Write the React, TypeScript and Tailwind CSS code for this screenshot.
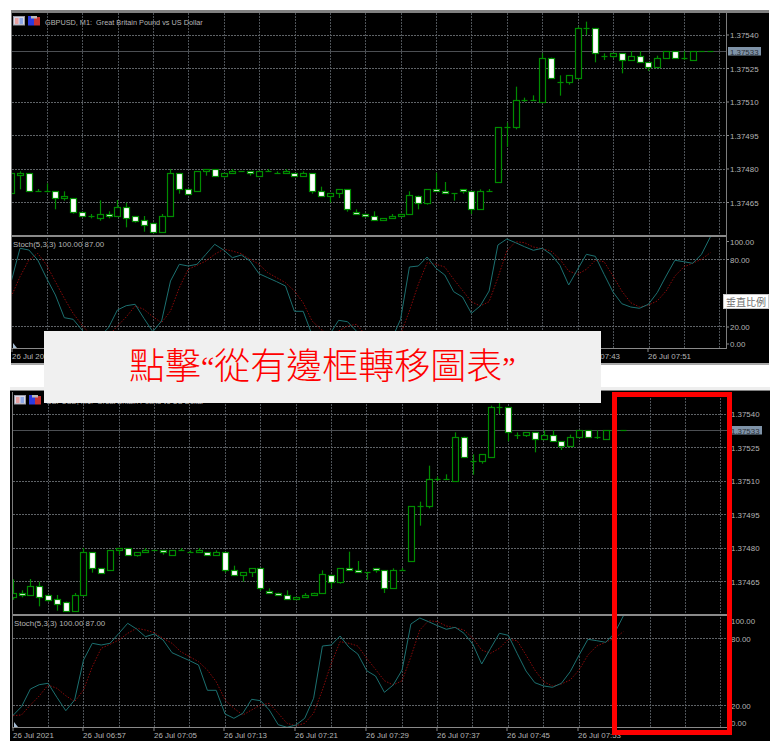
const candles: [string, number, number, number, number][] = [
  ["h", 520, 520, 580, 580], ["h", 514, 520, 526, 568], ["w", 520, 520, 574, 574], ["h", 567, 573, 573, 575],
  ["h", 550, 573, 573, 577], ["w", 574, 574, 594, 628], ["h", 574, 587, 594, 602], ["w", 594, 594, 635, 641],
  ["w", 635, 635, 648, 648], ["h", 642, 648, 648, 655], ["h", 601, 641, 655, 662], ["w", 634, 641, 648, 655],
  ["h", 600, 622, 649, 649], ["w", 608, 622, 655, 682], ["w", 648, 648, 662, 668], ["w", 648, 661, 675, 695],
  ["w", 668, 668, 695, 695], ["h", 642, 648, 695, 695], ["h", 507, 520, 649, 649], ["w", 520, 520, 567, 581],
  ["w", 567, 567, 581, 581], ["h", 514, 514, 574, 574], ["h", 507, 507, 514, 527], ["w", 507, 507, 527, 527],
  ["h", 520, 520, 527, 533], ["h", 507, 514, 520, 520], ["h", 514, 514, 514, 514], ["w", 514, 514, 520, 527],
  ["h", 514, 514, 527, 527],
  ["h", 507, 513, 513, 514], ["h", 514, 520, 520, 520], ["h", 507, 514, 520, 520], ["w", 520, 520, 527, 530],
  ["h", 514, 520, 527, 527], ["w", 520, 520, 574, 581], ["w", 560, 574, 587, 587], ["h", 580, 580, 587, 608],
  ["h", 567, 567, 580, 594], ["w", 567, 567, 628, 635], ["w", 628, 635, 641, 641], ["w", 641, 641, 648, 650],
  ["w", 634, 648, 661, 661], ["h", 655, 655, 661, 661], ["h", 642, 648, 655, 655], ["h", 641, 641, 649, 649],
  ["h", 574, 586, 641, 645], ["w", 587, 587, 608, 628], ["h", 567, 567, 608, 614], ["w", 518, 567, 574, 574],
  ["w", 546, 574, 580, 580], ["h", 580, 580, 580, 602], ["w", 567, 567, 574, 581], ["w", 574, 574, 628, 642],
  ["h", 568, 574, 628, 628], ["h", 567, 574, 574, 574], ["h", 381, 381, 547, 547], ["h", 368, 381, 381, 440],
  ["h", 260, 300, 381, 388],
  ["h", 293, 300, 300, 306], ["h", 286, 300, 300, 300], ["h", 160, 173, 306, 306], ["w", 173, 173, 233, 233],
  ["h", 226, 246, 246, 287], ["h", 226, 226, 246, 254], ["h", 80, 85, 233, 233], ["h", 65, 85, 85, 105],
  ["w", 85, 85, 160, 187], ["h", 160, 167, 167, 180], ["h", 160, 160, 167, 174], ["w", 160, 160, 180, 220],
  ["h", 153, 167, 180, 180], ["w", 153, 167, 187, 187], ["w", 187, 187, 200, 213], ["h", 167, 173, 200, 200],
  ["h", 153, 153, 173, 173], ["w", 153, 153, 173, 173], ["h", 153, 173, 173, 180], ["h", 153, 153, 180, 180],
  ["h", 153, 153, 153, 153], ["h", 153, 153, 153, 153],
];

// main and signal lines, i = 0 is the first candle of the top chart
const teal = [
  152, 52, 57, 87, 142, 192, 260, 265, 297, 330,
  317, 290, 237, 224, 220, 262, 302, 270, 150, 100, 105, 100, 70, 40, 57, 80, 72, 90, 128, 140, 152, 165, 241, 241,
  312, 325, 310, 268, 272, 300, 344, 352, 345, 325, 265, 108, 105, 78, 112, 132, 182, 198, 247, 225, 180, 42, 24,
  35, 47, 58, 52, 70, 103, 162, 115, 70, 76, 130, 183, 218, 228, 232, 220, 185, 135, 88, 92, 97, 70, 18,
];
const signal = [
  197, 137, 87, 67, 102, 152, 202, 247, 282, 312,
  317, 315, 285, 258, 225, 235, 257, 275, 240, 170, 115, 103, 90, 70, 55, 60, 68, 85, 100, 125, 140, 155, 180, 215,
  270, 295, 315, 300, 285, 280, 310, 340, 347, 340, 310, 240, 160, 95, 100, 108, 145, 178, 212, 225, 212, 140, 60,
  32, 35, 48, 53, 60, 85, 120, 130, 115, 88, 92, 135, 180, 215, 228, 222, 210, 180, 135, 108, 97, 85, 65,
];

const prices = [
  ["1.37540", 35],
  ["1.37525", 68.5],
  ["1.37510", 102],
  ["1.37495", 135.5],
  ["1.37480", 169],
  ["1.37465", 202.5],
] as const;
const levels = [
  ["100.00", 241.5],
  ["80.00", 259.5],
  ["20.00", 327],
  ["0.00", 344],
] as const;

const labelClass = "fill-[#b4b4b4] text-[7.9px] font-['Liberation_Sans',sans-serif]";

function Chart({
  id,
  box,
  gx,
  dy,
  cx,
  times,
}: {
  id: string;
  box: string;
  gx: number;
  dy: number;
  cx: number;
  times: [string, number][];
}) {
  const px = (i: number) => (33.5 + 26.55 * i) / 3 + cx;
  const left = 12 + gx;
  const line = (vals: number[]) =>
    vals.map((v, i) => `${px(i).toFixed(1)},${(231 + dy + v / 3).toFixed(1)}`).join(" ");

  return (
    <svg viewBox={box} className="block h-full w-full">
      <defs>
        <clipPath id={id + "main"}>
          <rect x={left} y={13 + dy} width={714} height={222} />
        </clipPath>
        <clipPath id={id + "sub"}>
          <rect x={left} y={237 + dy} width={714} height={111} />
        </clipPath>
      </defs>

      {/* grid */}
      {Array.from({ length: 20 }, (_, k) => {
        const x = Math.round(46.7 + 35.4 * k + gx) + 0.5;
        return (
          <line key={k} x1={x} x2={x} y1={13 + dy} y2={348 + dy} strokeDasharray="2 1" className="stroke-[#4d5257]" />
        );
      })}
      {[...prices.map((p) => p[1]), 259.5, 326.5].map((y) => {
        const yy = Math.floor(y + dy) + 0.5;
        return (
          <line key={y} x1={left} x2={726 + gx} y1={yy} y2={yy} strokeDasharray="2 1" className="stroke-[#5f6367]" />
        );
      })}
      <line x1={left} x2={726 + gx} y1={51.5 + dy} y2={51.5 + dy} className="stroke-[#4c4f53]" />

      {/* candles */}
      <g clipPath={`url(#${id}main)`}>
        {candles.map(([kind, wt, top, bot, wb], i) => {
          const x = Math.round(px(i)) + 0.5;
          const yt = Math.round(top / 3) + 0.5 + dy;
          const yb = Math.round(bot / 3) + 0.5 + dy;
          return (
            <g key={i} strokeWidth={1.2} className="stroke-[#008c00]">
              <line x1={x} x2={x} y1={wt / 3 + dy} y2={wb / 3 + dy} />
              {top === bot ? (
                <line x1={x - 3} x2={x + 3} y1={yt} y2={yt} />
              ) : (
                <rect
                  x={x - 3}
                  y={yt}
                  width={6}
                  height={yb - yt}
                  className={kind === "w" ? "fill-white" : "fill-black"}
                />
              )}
            </g>
          );
        })}
      </g>

      {/* stochastic */}
      <g clipPath={`url(#${id}sub)`} fill="none">
        <polyline points={line(signal)} strokeDasharray="1.5 1.5" className="stroke-[#8b0a0a]" />
        <polyline points={line(teal)} className="stroke-[#1c7070]" />
      </g>
      <polygon
        points={`${left + 1},${343 + dy} ${left + 1},${348 + dy} ${left + 5},${348 + dy}`}
        className="fill-[#a9c0d6]"
      />

      {/* panel lines */}
      <rect x={left - 1} y={235 + dy} width={715} height={2} className="fill-[#8a8a8a]" />
      <rect x={left - 1} y={348 + dy} width={715} height={1} className="fill-[#8a8a8a]" />
      <rect x={726 + gx} y={13 + dy} width={1} height={336} className="fill-[#7d7d7d]" />
      <rect x={left - 1} y={13 + dy} width={1} height={336} className="fill-[#7d7d7d]" />

      {/* right axis */}
      {[...prices, ...levels].map(([label, y]) => (
        <g key={label}>
          <line x1={727 + gx} x2={729 + gx} y1={y + dy} y2={y + dy} className="stroke-[#8a8a8a]" />
          <text x={730 + gx} y={y + dy + 3} className={labelClass}>
            {label}
          </text>
        </g>
      ))}
      <rect x={728 + gx} y={47 + dy} width={33} height={8.5} className="fill-[#7f93a8]" />
      <text x={730 + gx} y={54.5 + dy} className="fill-[#2c3138] text-[7.9px] font-['Liberation_Sans',sans-serif]">
        1.37533
      </text>

      {/* time axis */}
      {times.map(([label, x]) => (
        <g key={label}>
          <line x1={x} x2={x} y1={349 + dy} y2={352 + dy} className="stroke-[#8a8a8a]" />
          <text x={x} y={359 + dy} className={labelClass}>
            {label}
          </text>
        </g>
      ))}

      {/* title and indicator name */}
      <rect x={13.5 + gx} y={16.5 + dy} width={11} height={8.5} className="fill-[#d8d8e4] stroke-[#9a9aa6]" />
      <rect x={15 + gx} y={18 + dy} width={3.5} height={6} className="fill-[#e6a0a0]" />
      <rect x={19.5 + gx} y={18 + dy} width={3.5} height={6} className="fill-[#8fa8e8]" />
      <rect x={28 + gx} y={16 + dy} width={6} height={9.5} className="fill-[#2b3ae0]" />
      <rect x={34 + gx} y={17 + dy} width={6} height={8.5} className="fill-[#c83232]" />
      <rect x={31 + gx} y={16 + dy} width={6} height={2.5} className="fill-[#b9b9b9]" />
      <text
        x={45 + gx}
        y={24.5 + dy}
        xmlSpace="preserve"
        className="fill-[#b4b4b4] text-[7.3px] font-['Liberation_Sans',sans-serif]"
      >
        GBPUSD, M1:  Great Britain Pound vs US Dollar
      </text>
      <text x={13 + gx} y={247 + dy} className={labelClass}>
        Stoch(5,3,3) 100.00 87.00
      </text>
    </svg>
  );
}

export default function App() {
  return (
    <div className="relative h-[744px] w-[778px] overflow-hidden bg-white pt-[10px]">
      <div className="ml-[11px] flex h-[355px] w-[758px] flex-col bg-black">
        <div className="h-[3px] bg-[#808080]" />
        <div className="h-[350px]">
          <Chart
            id="top"
            box="11 13 758 350"
            gx={0}
            dy={0}
            cx={0}
            times={[
              ["26 Jul 2021", 12],
              ["26 Jul 07:43", 577],
              ["26 Jul 07:51", 648],
            ]}
          />
        </div>
        <div className="h-[2px] bg-[#a8a8a8]" />
      </div>

      <div className="mt-[22px] ml-[10px] flex h-[354px] w-[760px] flex-col bg-black">
        <div className="h-[3px] bg-[#eeeeee]" />
        <div className="h-px bg-[#808080]" />
        <div className="h-[350px]">
          <Chart
            id="bottom"
            box="10 391 760 350"
            gx={1}
            dy={379}
            cx={-87}
            times={[
              ["26 Jul 2021", 13],
              ["26 Jul 06:57", 83],
              ["26 Jul 07:05", 154],
              ["26 Jul 07:13", 224],
              ["26 Jul 07:21", 295],
              ["26 Jul 07:29", 366],
              ["26 Jul 07:37", 437],
              ["26 Jul 07:45", 507],
              ["26 Jul 07:53", 578],
            ]}
          />
        </div>
      </div>

      <div className="absolute top-[294px] left-[723px] flex h-[15px] w-[46px] items-center justify-center border border-[#c8c8c8] bg-white font-['Noto_Sans_CJK_TC',sans-serif] text-[10px] leading-none text-[#707070]">
        垂直比例
      </div>

      <div className="absolute top-[331px] left-[44px] flex h-[72px] w-[557px] items-center bg-[#f0f0f0] pl-[85px] font-['Liberation_Serif','Noto_Sans_CJK_TC',serif] text-[36px] leading-none font-light text-[#ff0000]">
        點擊<span className="text-[30px]">“</span>從有邊框轉移圖表<span className="text-[30px]">”</span>
      </div>

      <div className="absolute top-[392px] left-[612px] h-[343px] w-[120px] border-[5px] border-[#ff0000]" />
    </div>
  );
}
